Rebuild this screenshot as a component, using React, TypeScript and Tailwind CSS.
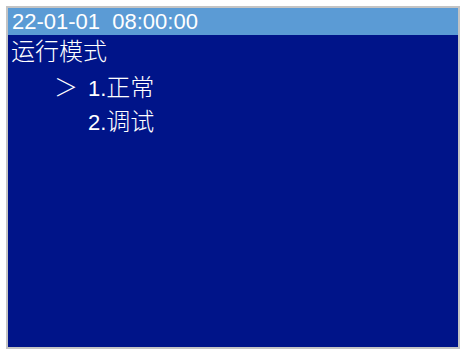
import React from 'react';

const latin = "font-['Liberation_Sans','Noto_Sans_CJK_SC',sans-serif]";
const cjk = "font-['Noto_Sans_CJK_SC',sans-serif] text-[24px] font-light";

function App() {
  return (
    <div className="w-[462px] h-[351px] bg-white pl-[6px] pt-[6px]">
      <div className="w-[454px] h-[343px] border-2 border-[#c4c4c4] bg-[#001489] flex flex-col text-white">
        {/* Header */}
        <div className={`h-[27px] bg-[#5b9bd5] flex items-center pl-[4px] text-[22px] whitespace-pre ${latin}`}>
          22-01-01  08:00:00
        </div>

        {/* Menu */}
        <div className="flex flex-col">
          <div className="h-[30px] flex items-center pl-[3px]">
            <span className={cjk}>运行模式</span>
          </div>
          <div className="h-[30px] mt-[6px] flex items-baseline leading-[30px]">
            <span className={`${cjk} w-[80px] text-right pr-[10px]`}>＞</span>
            <span className={`${latin} text-[22px]`}>1.</span>
            <span className={cjk}>正常</span>
          </div>
          <div className="h-[30px] mt-[4px] flex items-baseline leading-[30px] pl-[80px]">
            <span className={`${latin} text-[22px]`}>2.</span>
            <span className={cjk}>调试</span>
          </div>
        </div>
      </div>
    </div>
  );
}

export default App;
